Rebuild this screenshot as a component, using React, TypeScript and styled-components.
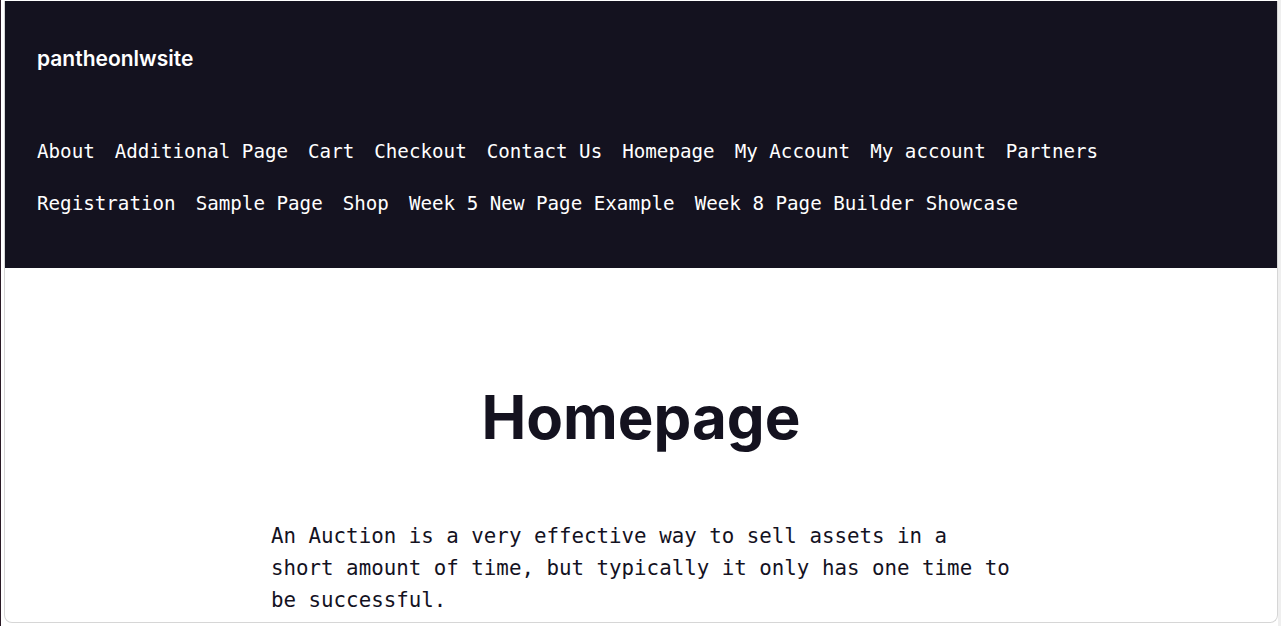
import styled, { createGlobalStyle } from 'styled-components';

const GlobalStyle = createGlobalStyle`
  html, body {
    margin: 0;
    padding: 0;
    background: #ffffff;
    overflow: hidden;
  }
`;

const navRows = [
  'About',
  'Additional Page',
  'Cart',
  'Checkout',
  'Contact Us',
  'Homepage',
  'My Account',
  'My account',
  'Partners',
  'Registration',
  'Sample Page',
  'Shop',
  'Week 5 New Page Example',
  'Week 8 Page Builder Showcase',
];

const App = () => {
  return (
    <>
      <GlobalStyle />
      <Screen>
        <EdgeLine />
        <Window>
          <Header>
            <SiteTitle>pantheonlwsite</SiteTitle>
            <Nav>
              {navRows.map((item) => (
                <NavLink key={item} href="#">
                  {item}
                </NavLink>
              ))}
            </Nav>
          </Header>
          <Main>
            <PageTitle>Homepage</PageTitle>
            <Content>
              <p>
                An Auction is a very effective way to sell assets in a short
                amount of time, but typically it only has one time to be
                successful.
              </p>
            </Content>
          </Main>
        </Window>
        <ScrollTrack />
      </Screen>
    </>
  );
};

const Screen = styled.div`
  display: flex;
  height: 626px;
  width: 1281px;
  background: #ffffff;
  overflow: hidden;
`;

const EdgeLine = styled.div`
  width: 1px;
  margin-right: 3px;
  background: #2a1a26;
  flex-shrink: 0;
`;

const Window = styled.div`
  flex: 1;
  margin: 1px 0 3px 0;
  border: 1px solid #d6d6d6;
  border-top: none;
  border-radius: 0 0 8px 8px;
  overflow: hidden;
  background: #ffffff;
  display: flex;
  flex-direction: column;
`;

const ScrollTrack = styled.div`
  width: 3px;
  background: #efefef;
  flex-shrink: 0;
`;

const Header = styled.header`
  background: #14121f;
  color: #ffffff;
  padding: 44px 32px 36px;
  height: 267px;
  box-sizing: border-box;
`;

const SiteTitle = styled.div`
  font-family: Inter, 'Liberation Sans', sans-serif;
  font-weight: 600;
  font-size: 21px;
  line-height: 28px;
`;

const Nav = styled.nav`
  display: flex;
  flex-wrap: wrap;
  column-gap: 20px;
  margin-top: 53px;
`;

const NavLink = styled.a`
  font-family: 'DejaVu Sans Mono', monospace;
  font-size: 19.2px;
  line-height: 52px;
  color: #ffffff;
  text-decoration: none;
  white-space: nowrap;
`;

const Main = styled.main`
  display: flex;
  flex-direction: column;
  align-items: center;
  padding-top: 113px;
  color: #14121f;
`;

const PageTitle = styled.h1`
  margin: 0;
  font-family: Inter, 'Liberation Sans', sans-serif;
  font-weight: 700;
  font-size: 60px;
  line-height: 72px;
`;

const Content = styled.div`
  width: 740px;
  margin-top: 67px;

  p {
    margin: 0;
    font-family: 'DejaVu Sans Mono', monospace;
    font-size: 20.8px;
    line-height: 32px;
  }
`;

export default App;
